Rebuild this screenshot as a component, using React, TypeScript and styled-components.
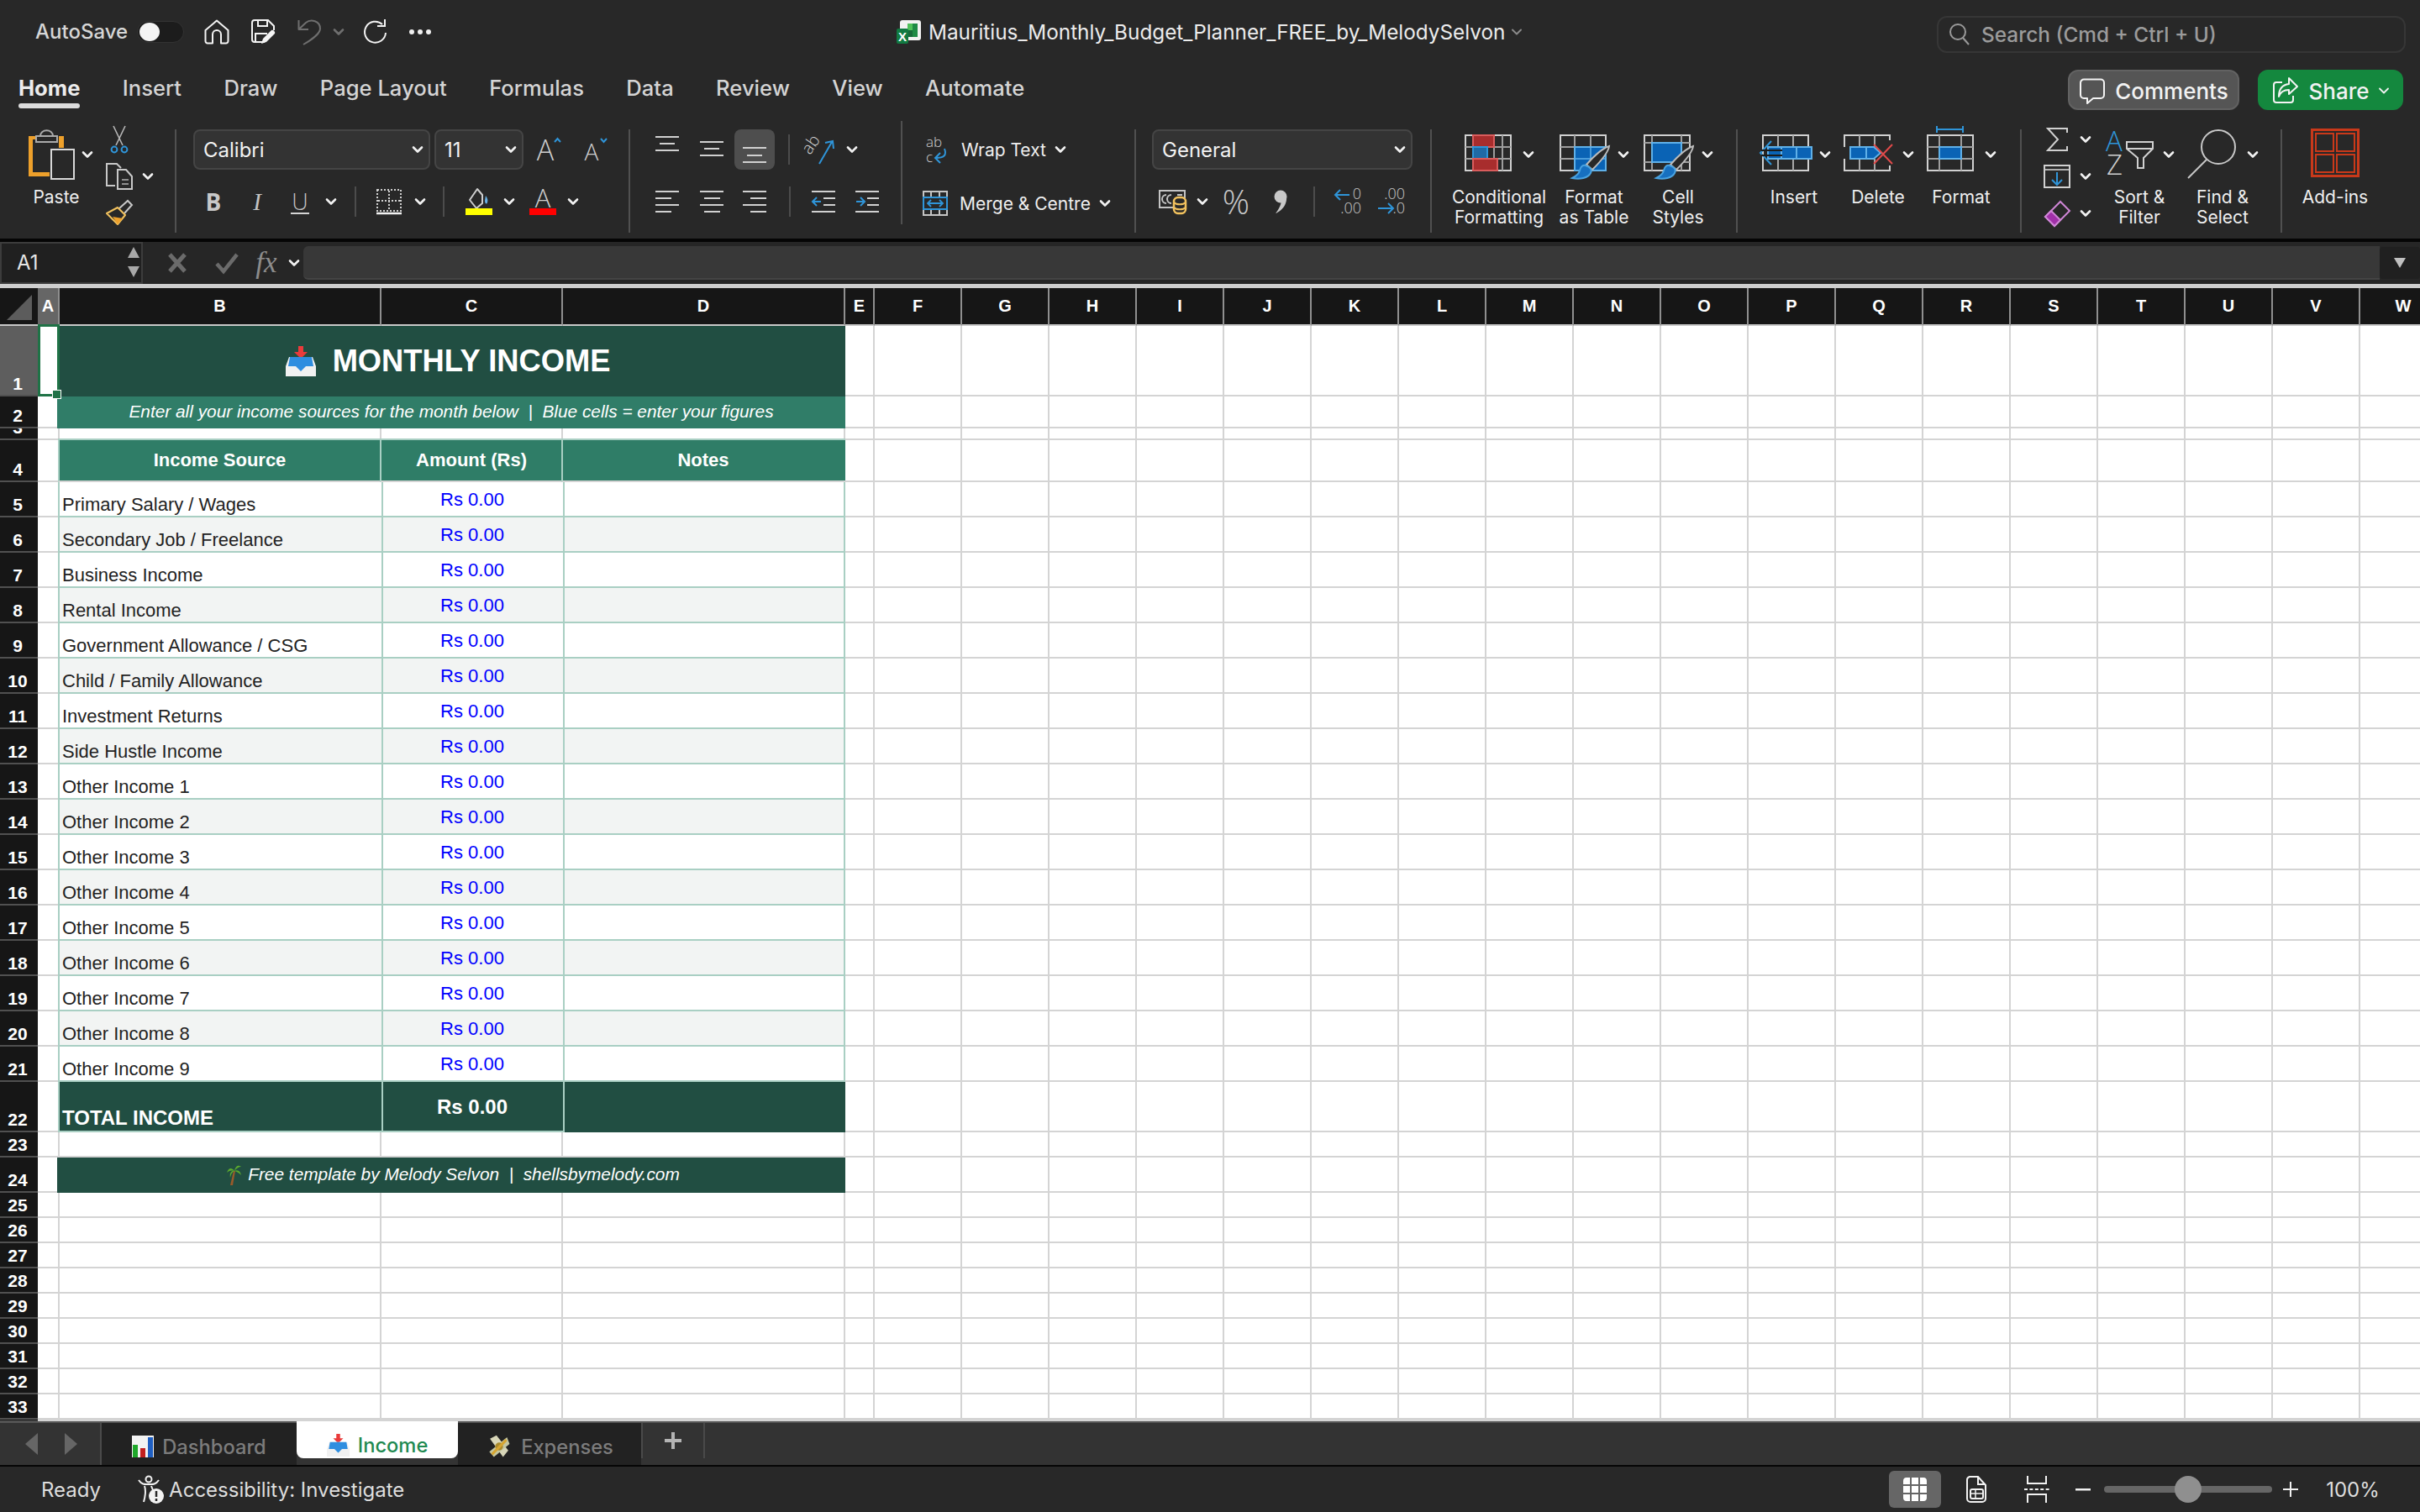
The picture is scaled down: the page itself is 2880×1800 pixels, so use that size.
import React from "react";
import styled, { createGlobalStyle } from "styled-components";

const GlobalStyle = createGlobalStyle`
  html, body {
    margin: 0;
    padding: 0;
    width: 2880px;
    height: 1800px;
    overflow: hidden;
    background: #282828;
    font-family: Inter, "Noto Sans", sans-serif;
  }
  * { box-sizing: border-box; }
`;

const Page = styled.div`
  width: 2880px;
  height: 1800px;
  display: flex;
  flex-direction: column;
  overflow: hidden;
`;

/* ---------- title bar ---------- */
const TitleBar = styled.div`
  height: 72px;
  flex: none;
  display: flex;
  align-items: center;
  padding: 3px 17px 0 42px;
  background: #282828;
`;
const QuickTools = styled.div`
  width: 1025px;
  display: grid;
  grid-template-columns: 121px 80px 55px 56px 43px 35px 55px 25px;
  align-items: center;
  justify-items: start;
`;
const AutoSaveLabel = styled.span`
  font-size: 24px;
  font-weight: 500;
  color: #d6d6d6;
`;
const Toggle = styled.div`
  width: 56px;
  height: 26px;
  border-radius: 13px;
  background: #1c1c1c;
  border: 1px solid #333;
  padding: 1px 2px;
`;
const ToggleKnob = styled.div`
  width: 24px;
  height: 22px;
  border-radius: 50%;
  background: #f4f4f4;
`;
const FileName = styled.div`
  display: flex;
  align-items: center;
  gap: 8px;
  font-size: 24.3px;
  color: #ececec;
  white-space: nowrap;
`;
const SearchBox = styled.div`
  margin-left: auto;
  width: 558px;
  height: 44px;
  margin-top: 6px;
  border: 2px solid #363636;
  border-radius: 12px;
  display: flex;
  align-items: center;
  gap: 13px;
  padding-left: 12px;
  font-size: 24.4px;
  font-weight: 500;
  color: #9b9b9b;
`;

/* ---------- ribbon tabs ---------- */
const TabsRow = styled.div`
  height: 64px;
  flex: none;
  display: flex;
  align-items: center;
  padding-left: 22px;
  padding-right: 20px;
  background: #282828;
`;
const MenuTab = styled.span<{ $active?: boolean }>`
  position: relative;
  margin-right: 50.4px;
  font-size: 25.6px;
  font-weight: ${(p) => (p.$active ? 700 : 500)};
  color: ${(p) => (p.$active ? "#ececec" : "#d4d4d4")};
  &::after {
    content: "";
    display: ${(p) => (p.$active ? "block" : "none")};
    position: absolute;
    left: 0;
    right: 0;
    bottom: -9px;
    height: 6px;
    border-radius: 3px;
    background: #dcdcdc;
  }
`;
const ActionButtons = styled.div`
  margin-left: auto;
  margin-top: 6px;
  display: flex;
  gap: 22px;
`;
const ActionButton = styled.button<{ $bg: string; $w: number; $line: string }>`
  width: ${(p) => p.$w}px;
  height: 48px;
  border-radius: 12px;
  border: 2px solid ${(p) => p.$line};
  background: ${(p) => p.$bg};
  color: #f2f2f2;
  font-family: inherit;
  font-size: 26px;
  font-weight: 500;
  display: flex;
  align-items: center;
  justify-content: center;
  gap: 11px;
  padding: 2px 0 0;
`;

/* ---------- ribbon ---------- */
const Ribbon = styled.div`
  height: 148px;
  flex: none;
  display: flex;
  align-items: flex-start;
  padding-top: 18px;
  background: #282828;
  color: #f0f0f0;
`;
const Group = styled.div<{ $w: number; $pl?: number }>`
  width: ${(p) => p.$w}px;
  height: 123px;
  flex: none;
  padding-left: ${(p) => p.$pl ?? 0}px;
  display: flex;
`;
const GroupStack = styled(Group)<{ $gap?: number }>`
  flex-direction: column;
  gap: ${(p) => p.$gap ?? 14}px;
`;
const GroupSep = styled.div<{ $up?: boolean }>`
  width: 2px;
  height: 123px;
  flex: none;
  background: #505050;
  margin-top: ${(p) => (p.$up ? -10 : 0)}px;
`;
const PasteCol = styled.div`
  width: 118px;
  padding-left: 34px;
  flex: none;
`;
const PasteTop = styled.div`
  display: flex;
  align-items: center;
  gap: 10px;
  height: 60px;
`;
const RibbonLabel = styled.div<{ $w?: number }>`
  width: ${(p) => (p.$w ? `${p.$w}px` : "auto")};
  font-size: 21px;
  line-height: 24px;
  text-align: center;
  color: #efefef;
  white-space: nowrap;
`;
const PasteLabel = styled(RibbonLabel)`
  margin-top: 9px;
`;
const ClipTools = styled.div`
  display: flex;
  flex-direction: column;
  margin-top: -4px;
  padding-left: 8px;
  gap: 12px;
`;
const ClipTool = styled.div`
  display: grid;
  grid-template-columns: 32px 12px;
  column-gap: 12px;
  justify-items: center;
  align-items: center;
`;
const Row48 = styled.div`
  height: 48px;
  display: flex;
  align-items: center;
`;
const Dropdown = styled.div<{ $w: number; $ml: number }>`
  width: ${(p) => p.$w}px;
  height: 48px;
  margin-left: ${(p) => p.$ml}px;
  flex: none;
  display: flex;
  align-items: center;
  justify-content: space-between;
  padding: 0 7px 0 10px;
  background: #333;
  border: 2px solid #454545;
  border-radius: 8px;
  font-size: 24px;
  color: #f2f2f2;
`;
const GlyphSlot = styled.div<{ $w: number; $ml: number }>`
  width: ${(p) => p.$w}px;
  margin-left: ${(p) => p.$ml}px;
  flex: none;
  display: flex;
  justify-content: center;
`;
const CellRow = styled.div<{ $cols: string; $pl: number }>`
  height: 48px;
  padding-left: ${(p) => p.$pl}px;
  display: grid;
  grid-template-columns: ${(p) => p.$cols};
  align-items: center;
  justify-items: center;
`;
const Highlight = styled.div`
  width: 48px;
  height: 48px;
  background: #4e4e4e;
  border-radius: 8px;
  display: flex;
  align-items: center;
  justify-content: center;
  justify-self: end;
`;
const InnerSep = styled.div<{ $h: number }>`
  width: 2px;
  height: ${(p) => p.$h}px;
  background: #4c4c4c;
`;
const BoldGlyph = styled.span`
  font-family: "Open Sans", sans-serif;
  font-size: 28px;
  font-weight: 700;
  line-height: 28px;
  color: #c8c8c8;
`;
const ItalicGlyph = styled.span`
  font-family: "Liberation Serif", serif;
  font-size: 29px;
  font-style: italic;
  line-height: 28px;
  color: #c4c4c4;
`;
const UnderGlyph = styled.span`
  font-family: "Open Sans", sans-serif;
  font-size: 27px;
  font-weight: 300;
  line-height: 27px;
  color: #c4c4c4;
  border-bottom: 2px solid #d4d4d4;
  padding: 0 1px;
`;
const PercentGlyph = styled.span`
  font-family: "Open Sans", sans-serif;
  font-size: 40px;
  font-weight: 300;
  line-height: 40px;
  color: #c8c8c8;
`;
const ColorBarTool = styled.div`
  display: flex;
  flex-direction: column;
  align-items: center;
`;
const ColorBar = styled.div<{ $c: string }>`
  width: 32px;
  height: 8px;
  background: ${(p) => p.$c};
`;
const MiniRow = styled.div<{ $pl: number }>`
  height: 48px;
  display: flex;
  align-items: center;
  padding-left: ${(p) => p.$pl}px;
`;
const MiniLabel = styled.span<{ $ml: number }>`
  margin: 0 11px 0 ${(p) => p.$ml}px;
  font-size: 21px;
  color: #efefef;
  white-space: nowrap;
`;
const LargeBtn = styled.div<{ $w: number }>`
  width: ${(p) => p.$w}px;
  flex: none;
  display: flex;
  flex-direction: column;
  align-items: center;
`;
const LargeIconRow = styled.div<{ $gap: number }>`
  height: 64px;
  margin-top: -2px;
  margin-bottom: 7px;
  display: flex;
  align-items: center;
  gap: ${(p) => p.$gap}px;
`;
const StackCol = styled.div`
  width: 92px;
  flex: none;
  margin-top: -10px;
  padding-left: 22px;
  display: flex;
  flex-direction: column;
`;
const StackRow = styled.div`
  height: 44px;
  display: grid;
  grid-template-columns: 40px 12px;
  column-gap: 8px;
  align-items: center;
  justify-items: center;
`;

/* ---------- formula bar ---------- */
const FormulaBar = styled.div`
  height: 54px;
  flex: none;
  display: flex;
  align-items: flex-start;
  border-top: 4px solid #050505;
  background: #262626;
`;
const NameBox = styled.div`
  width: 170px;
  height: 50px;
  flex: none;
  display: flex;
  align-items: center;
  justify-content: space-between;
  padding: 0 2px 2px 18px;
  background: #202020;
  border: 2px solid #3c3c3c;
  font-size: 24px;
  color: #e6e6e6;
`;
const FormulaTools = styled.div`
  width: 191px;
  flex: none;
  height: 50px;
  display: grid;
  grid-template-columns: 50px 68px 26px 39px;
  padding-left: 16px;
  align-items: center;
  justify-items: center;
`;
const FxGlyph = styled.span`
  font-family: "Liberation Serif", serif;
  font-style: italic;
  font-size: 35px;
  color: #8c8c8c;
`;
const FormulaInput = styled.div`
  flex: 1;
  height: 40px;
  margin-top: 5px;
  background: #383838;
  border-radius: 6px 0 0 6px;
  border-bottom: 2px solid #444;
`;
const FormulaExpand = styled.div`
  width: 48px;
  height: 38px;
  margin-top: 6px;
  flex: none;
  background: #202020;
  border-radius: 4px;
  display: flex;
  align-items: center;
  justify-content: center;
`;

/* ---------- sheet ---------- */
const Sheet = styled.div`
  height: 1354px;
  flex: none;
  overflow: hidden;
  border-top: 5px solid #cfcfcf;
  background: #fff;
  display: grid;
  grid-template-columns: 45px 26px 383px 216px 336px 35px repeat(18, 104px);
  grid-template-rows: 45px 84px 38px 14px 50px repeat(17, 42px) 60px 30px 42px repeat(9, 30px) 2px;
  font-family: "Liberation Sans", Arial, sans-serif;
`;
const Corner = styled.div`
  background: #161616;
  border-bottom: 2px solid #c8c8c8;
  padding: 8px 6px 4px 8px;
`;
const ColHead = styled.div<{ $on?: boolean }>`
  display: flex;
  align-items: center;
  justify-content: center;
  overflow: hidden;
  background: ${(p) => (p.$on ? "#666" : "#161616")};
  border-right: 2px solid #8f8f8f;
  border-bottom: 2px solid #c8c8c8;
  font-size: 20px;
  font-weight: 700;
  color: #fff;
`;
const RowHead = styled.div<{ $on?: boolean }>`
  display: flex;
  align-items: flex-end;
  justify-content: center;
  overflow: hidden;
  padding: 0 3px 1px 0;
  background: ${(p) => (p.$on ? "#5e5e5e" : "#161616")};
  border-bottom: 2px solid #505050;
  font-size: 21px;
  line-height: 24px;
  font-weight: 700;
  color: #fff;
`;
const Cell = styled.div`
  min-width: 0;
  border-right: 2px solid #d4d4d4;
  border-bottom: 2px solid #d4d4d4;
  background: #fff;
`;
const ActiveCell = styled.div`
  position: relative;
  margin-top: -2px;
  border: 3px solid #1f7246;
  background: #fff;
  &::after {
    content: "";
    position: absolute;
    right: -5px;
    bottom: -6px;
    width: 9px;
    height: 9px;
    background: #1f7246;
    border: 1px solid #fff;
    z-index: 2;
  }
`;
const Banner = styled.div<{ $bg: string }>`
  grid-column: span 3;
  display: flex;
  align-items: center;
  justify-content: center;
  gap: 20px;
  padding-right: 8px;
  background: ${(p) => p.$bg};
  color: #fff;
  margin-left: -3px;
`;
const BannerTitle = styled.span`
  font-size: 36.3px;
  font-weight: 700;
  line-height: 44px;
`;
const BannerNote = styled.span`
  font-size: 20.85px;
  font-style: italic;
  white-space: pre;
  padding: 0 0 2px 8px;
`;
const FooterNote = styled(BannerNote)`
  display: flex;
  align-items: center;
  gap: 8px;
  padding: 0 0 2px 12px;
`;
const HeadCell = styled.div`
  display: flex;
  align-items: center;
  justify-content: center;
  padding-right: 2px;
  background: #2f7d67;
  border-left: 2px solid #a9cfc3;
  border-top: 2px solid #a9cfc3;
  border-bottom: 2px solid #d4d4d4;
  margin-left: -2px;
  margin-top: -2px;
  font-size: 22px;
  font-weight: 700;
  color: #fff;
`;
const LabelCell = styled.div<{ $alt: boolean }>`
  display: flex;
  align-items: flex-end;
  padding: 0 0 1px 3px;
  background: ${(p) => (p.$alt ? "#f2f4f3" : "#fff")};
  border-left: 2px solid #a9cfc3;
  border-bottom: 2px solid #a9cfc3;
  margin-left: -2px;
  font-size: 22px;
  line-height: 24px;
  color: #222;
  white-space: nowrap;
`;
const AmountCell = styled.div<{ $alt: boolean }>`
  display: flex;
  align-items: center;
  justify-content: center;
  padding: 1px 2px 0 0;
  background: ${(p) => (p.$alt ? "#f2f4f3" : "#fff")};
  border-bottom: 2px solid #a9cfc3;
  border-left: 2px solid #a9cfc3;
  font-size: 22px;
  color: #0000ff;
`;
const NotesCell = styled.div<{ $alt: boolean }>`
  background: ${(p) => (p.$alt ? "#f2f4f3" : "#fff")};
  border-bottom: 2px solid #a9cfc3;
  border-left: 2px solid #a9cfc3;
  border-right: 2px solid #a9cfc3;
`;
const TotalCell = styled.div`
  display: flex;
  align-items: flex-end;
  padding: 0 0 1px 3px;
  margin-left: -2px;
  background: #214e42;
  border-left: 2px solid #a9cfc3;
  border-bottom: 2px solid #a9cfc3;
  font-size: 24px;
  line-height: 28px;
  font-weight: 700;
  color: #fff;
`;
const TotalAmount = styled.div`
  display: flex;
  align-items: center;
  justify-content: center;
  padding: 1px 2px 0 0;
  background: #214e42;
  border-left: 2px solid #a9cfc3;
  border-bottom: 2px solid #a9cfc3;
  font-size: 24px;
  font-weight: 700;
  color: #fff;
`;
const TotalBlank = styled.div`
  background: #214e42;
  border-left: 2px solid #a9cfc3;
`;

/* ---------- sheet tabs ---------- */
const TabBar = styled.div`
  height: 52px;
  flex: none;
  display: flex;
  background: #333;
  border-top: 2px solid #555;
`;
const TabArrows = styled.div`
  width: 121px;
  flex: none;
  display: flex;
  padding-left: 30px;
  gap: 32px;
  align-items: center;
  border-right: 2px solid #4a4a4a;
`;
const SheetTab = styled.div<{ $w: number }>`
  width: ${(p) => p.$w}px;
  flex: none;
  height: 50px;
  display: flex;
  align-items: center;
  justify-content: center;
  gap: 10px;
  padding-top: 6px;
  background: #222;
  font-size: 23.7px;
  font-weight: 500;
  color: #7c7c7c;
`;
const ActiveTab = styled(SheetTab)`
  height: 44px;
  margin-top: -2px;
  padding-top: 12px;
  background: #fff;
  color: #1f8a52;
  border-radius: 0 0 8px 8px;
`;
const AddTab = styled.div`
  width: 76px;
  flex: none;
  height: 42px;
  display: flex;
  align-items: center;
  justify-content: center;
  border-left: 2px solid #4a4a4a;
  border-right: 2px solid #4a4a4a;
`;

/* ---------- status bar ---------- */
const StatusBar = styled.div`
  height: 56px;
  flex: none;
  display: flex;
  align-items: center;
  padding-left: 49px;
  border-top: 2px solid #050505;
  background: #282828;
  font-size: 24px;
  color: #dedede;
`;
const StatusItem = styled.div<{ $ml: number }>`
  display: flex;
  align-items: center;
  gap: 5px;
  margin-left: ${(p) => p.$ml}px;
`;
const StatusRight = styled.div`
  margin-left: auto;
  display: grid;
  grid-template-columns: 62px 84px 60px 50px 200px 44px 104px;
  padding-right: 28px;
  align-items: center;
  justify-items: center;
`;
const ViewButton = styled.div`
  width: 62px;
  height: 44px;
  border-radius: 6px;
  background: #666;
  display: flex;
  align-items: center;
  justify-content: center;
`;
const ZoomTrack = styled.div`
  width: 200px;
  height: 8px;
  border-radius: 4px;
  background: #666;
  position: relative;
`;
const ZoomKnob = styled.div`
  position: absolute;
  left: 84px;
  top: -12px;
  width: 32px;
  height: 32px;
  border-radius: 50%;
  background: #8f8f8f;
`;

/* ---------- drawings ---------- */
const Svg = styled.svg`
  display: block;
  flex: none;
  overflow: visible;
`;
const Ico: React.FC<{ w: number; h: number; vw?: number; vh?: number; children: React.ReactNode }> = ({ w, h, vw, vh, children }) => (
  <Svg width={w} height={h} viewBox={`0 0 ${vw ?? w} ${vh ?? h}`} fill="none">
    {children}
  </Svg>
);

const Chevron: React.FC<{ c?: string; w?: number }> = ({ c = "#f2f2f2", w = 2.6 }) => (
  <Ico w={12} h={8}>
    <path d="M1 1.5 6 6.500 11 1.500" stroke={c} strokeWidth={w} strokeLinecap="round" strokeLinejoin="round" />
  </Ico>
);

const G = "#d0d0d0";
const BLUE = "#2f95d9";

const HomeIcon = () => (
  <Ico w={30} h={30}>
    <path d="M1.500 13 15 1.500 28.500 13V26a2.500 2.500 0 0 1-2.500 2.500H20V18a5 5 0 0 0-10 0v10.500H4A2.500 2.500 0 0 1 1.500 26Z" stroke="#f4f4f4" strokeWidth="2" strokeLinejoin="round" />
  </Ico>
);
const SaveIcon = () => (
  <Ico w={31} h={32}>
    <path d="M17 28H5a3 3 0 0 1-3-3V5a3 3 0 0 1 3-3h16l7 7v5" stroke="#f4f4f4" strokeWidth="2" />
    <path d="M9 2v7h11V2M6 27V18h14" stroke="#f4f4f4" strokeWidth="2" />
    <path d="M13 30l2-6 10-10c2-1 5 2 4 4L19 28Z" fill="#f4f4f4" />
  </Ico>
);
const UndoIcon = () => (
  <Ico w={28} h={32}>
    <path d="M1.500 2V13H13M1.500 13 10 5c6-5 17-2 17 7 0 6-11 14-20 19" stroke="#6f6f6f" strokeWidth="2" strokeLinejoin="round" />
  </Ico>
);
const RedoIcon = () => (
  <Ico w={28} h={30}>
    <path d="M23 6A12.500 12.500 0 1 0 27 16" stroke="#f4f4f4" strokeWidth="2" />
    <path d="M26 0V8H17" stroke="#f4f4f4" strokeWidth="2" />
  </Ico>
);
const Dots = () => (
  <Ico w={26} h={6}>
    <circle cx="3" cy="3" r="3" fill="#f0f0f0" />
    <circle cx="13" cy="3" r="3" fill="#f0f0f0" />
    <circle cx="23" cy="3" r="3" fill="#f0f0f0" />
  </Ico>
);
const ExcelFile = () => (
  <Ico w={30} h={28}>
    <rect x="4" y="0" width="25" height="24" rx="3" fill="#f2f2f2" />
    <rect x="13" y="4" width="6" height="8" fill="#4fc05a" />
    <rect x="19" y="4" width="6" height="16" fill="#1e8a45" />
    <rect x="13" y="12" width="6" height="8" fill="#17693a" />
    <rect x="0" y="10" width="14" height="18" rx="2" fill="#117a41" />
    <text x="7" y="24.500" textAnchor="middle" fontFamily="Liberation Sans" fontSize="15" fontWeight="700" fill="#fff">X</text>
  </Ico>
);
const SearchIcon = () => (
  <Ico w={26} h={26}>
    <circle cx="11" cy="10" r="9" stroke="#9a9a9a" strokeWidth="2" />
    <path d="M17 17l7 8" stroke="#9a9a9a" strokeWidth="2" />
  </Ico>
);
const CommentIcon = () => (
  <Ico w={32} h={30}>
    <path d="M6 1.500h20a4 4 0 0 1 4 4V20a4 4 0 0 1-4 4H17l-7 6v-6H6a4 4 0 0 1-4-4V5.500a4 4 0 0 1 4-4Z" stroke="#f4f4f4" strokeWidth="2" strokeLinejoin="round" />
  </Ico>
);
const ShareIcon = () => (
  <Ico w={32} h={32}>
    <path d="M12 6H5a3 3 0 0 0-3 3v18a3 3 0 0 0 3 3h17a3 3 0 0 0 3-3v-5" stroke="#f4f4f4" strokeWidth="2" />
    <path d="M20 1l10 10-10 9v-5c-6 0-10 2-12 8 0-9 4-14 12-15Z" stroke="#f4f4f4" strokeWidth="2" strokeLinejoin="round" />
  </Ico>
);

const PasteIcon = () => (
  <Ico w={54} h={60}>
    <path d="M0 8H10V12H5V51H25V56H0Z" fill="#eda02b" />
    <rect x="36" y="8" width="6" height="14" fill="#eda02b" />
    <path d="M14 8C14-1 29-1 29 8" stroke="#aaa" strokeWidth="2" />
    <rect x="9" y="8" width="25" height="7" fill="#282828" stroke="#aaa" strokeWidth="2" />
    <rect x="27" y="24" width="27" height="35" fill="#282828" stroke="#d8d8d8" strokeWidth="2" />
  </Ico>
);
const CutIcon = () => (
  <Ico w={22} h={32}>
    <path d="M4 0 15 23M18 0 7 23" stroke="#b8b8b8" strokeWidth="1.600" />
    <circle cx="5" cy="28" r="3.400" stroke={BLUE} strokeWidth="2" />
    <circle cx="17" cy="28" r="3.400" stroke={BLUE} strokeWidth="2" />
  </Ico>
);
const CopyIcon = () => (
  <Ico w={32} h={32}>
    <path d="M11 27H1V1H13L18 6" stroke="#c8c8c8" strokeWidth="2" />
    <path d="M14 8H24L31 16V31H14Z" fill="#282828" stroke="#c8c8c8" strokeWidth="2" />
    <path d="M19 20H27M19 25H27" stroke="#8f8f8f" strokeWidth="2" />
  </Ico>
);
const BrushIcon = () => (
  <Ico w={32} h={30}>
    <path d="M16 10 26 1 31 6 22 16" stroke="#c8c8c8" strokeWidth="2" />
    <path d="M14 9 23 18 14 29 1 16Z" stroke="#f2c25e" strokeWidth="2" strokeLinejoin="round" />
    <path d="M8 20 20 22 14 29Z" fill="#eda02b" />
  </Ico>
);
const GrowFont = ({ up }: { up: boolean }) => (
  <Ico w={30} h={30}>
    <text x="11" y="28" textAnchor="middle" fontFamily="Open Sans" fontWeight="300" fontSize={up ? 34 : 28} fill="#cfcfcf">A</text>
    <path d={up ? "M22 6l3.500-4 3.500 4" : "M22 2l3.500 4 3.500-4"} stroke={BLUE} strokeWidth="2" />
  </Ico>
);
const BorderIcon = () => (
  <Ico w={30} h={30}>
    <rect x="1" y="1" width="28" height="25" stroke="#d0d0d0" strokeWidth="2" strokeDasharray="2 2" />
    <path d="M15 2V26M2 14H28" stroke="#d0d0d0" strokeWidth="2" strokeDasharray="2 2" />
    <path d="M0 29H30" stroke="#f2f2f2" strokeWidth="2.500" />
  </Ico>
);
const FillIcon = () => (
  <Ico w={32} h={24}>
    <path d="M14 1 20 8V18L13 24 5 14Z" stroke="#cfcfcf" strokeWidth="2" strokeLinejoin="round" />
    <path d="M24 9c2 3 3 5 2 8s-3 1-3-2Z" fill="#67b0e6" />
  </Ico>
);
/* three lines, placed inside the 48px row by their offset from its top */
const AlignV = ({ y }: { y: number[] }) => (
  <Ico w={28} h={48}>
    <path d={`M0 ${y[0]}H28M5 ${y[1]}H23M0 ${y[2]}H28`} stroke={G} strokeWidth="2" />
  </Ico>
);
const AlignH = ({ mode }: { mode: "l" | "c" | "r" }) => {
  const s = mode === "l" ? 0 : mode === "c" ? 5 : 9;
  return (
    <Ico w={28} h={28}>
      <path d={`M0 2H28M${s} 10H${s + 19}M0 18H28M${s} 26H${s + 19}`} stroke={G} strokeWidth="2" />
    </Ico>
  );
};
const OrientIcon = () => (
  <Ico w={36} h={36}>
    <text x="3" y="25" fontFamily="Open Sans" fontWeight="300" fontSize="20" fill="#cfcfcf" transform="rotate(-55 3 25)">ab</text>
    <path d="M14 35 29 9M21 10l9-2 1 9" stroke={BLUE} strokeWidth="2" />
  </Ico>
);
const IndentIcon = ({ out }: { out: boolean }) => (
  <Ico w={28} h={28}>
    <path d="M0 2H28M14 10H28M14 18H28M0 26H28" stroke={G} strokeWidth="2" />
    <path d={out ? "M11 14H1M6 9 1 14 6 19" : "M1 14H11M6 9 11 14 6 19"} stroke={BLUE} strokeWidth="2" />
  </Ico>
);
const WrapIcon = () => (
  <Ico w={24} h={34}>
    <text x="0" y="14" fontFamily="Open Sans" fontWeight="300" fontSize="17" fill="#cfcfcf">ab</text>
    <text x="0" y="32" fontFamily="Open Sans" fontWeight="300" fontSize="17" fill="#cfcfcf">c</text>
    <path d="M22 16c3 8-1 11-10 11M17 21 11 27 17 33" stroke={BLUE} strokeWidth="2" />
  </Ico>
);
const MergeIcon = () => (
  <Ico w={30} h={30}>
    <rect x="1" y="1" width="28" height="28" stroke="#c4c4c4" strokeWidth="2" />
    <path d="M10 1V8M20 1V8M10 22V29M20 22V29" stroke="#c4c4c4" strokeWidth="2" />
    <rect x="1" y="8" width="28" height="14" fill="#282828" stroke={BLUE} strokeWidth="2" />
    <path d="M6 15H24M10 11 6 15 10 19M20 11 24 15 20 19" stroke={BLUE} strokeWidth="1.800" />
  </Ico>
);
const CurrencyIcon = () => (
  <Ico w={33} h={30}>
    <rect x="1" y="2" width="30" height="20" stroke="#c4c4c4" strokeWidth="2" />
    <path d="M9 7a4 4 0 0 0 0 10M15 7a4 4 0 0 0 0 10M22 7h6" stroke="#c4c4c4" strokeWidth="2" />
    <rect x="18" y="10" width="14" height="19" rx="5" fill="#282828" stroke="#f2c25e" strokeWidth="2.500" />
    <path d="M18 16c3 3 11 3 14 0M18 22c3 3 11 3 14 0" stroke="#f2c25e" strokeWidth="2" />
  </Ico>
);
const CommaIcon = () => (
  <Ico w={16} h={28}>
    <circle cx="8" cy="8" r="7.500" fill="#c8c8c8" />
    <path d="M15 8C16 18 9 25 2 28 7 22 9 16 9 12Z" fill="#c8c8c8" />
  </Ico>
);
const DecimalIcon = ({ more }: { more: boolean }) => (
  <Ico w={32} h={32}>
    <text x="32" y="13" textAnchor="end" fontFamily="Open Sans" fontWeight="300" fontSize="18" fill="#c8c8c8">{more ? "0" : ".00"}</text>
    <text x="32" y="30" textAnchor="end" fontFamily="Open Sans" fontWeight="300" fontSize="18" fill="#c8c8c8">{more ? ".00" : ".0"}</text>
    {more ? (
      <path d="M18 8H1M7 2 1 8 7 14" stroke={BLUE} strokeWidth="2" />
    ) : (
      <path d="M0 24H18M12 18 18 24 12 30" stroke={BLUE} strokeWidth="2" />
    )}
  </Ico>
);

const GridLines: React.FC<{ w: number; xs: number[]; ys?: number[] }> = ({ w, xs, ys = [23, 37] }) => (
  <>
    <rect x="1" y="9" width={w - 2} height="42" stroke={G} strokeWidth="2" />
    <path d={xs.map((x) => `M${x} 9V51`).join("") + ys.map((y) => `M1 ${y}H${w - 1}`).join("")} stroke="#9d9d9d" strokeWidth="2" />
  </>
);
const CondIcon = () => (
  <Ico w={56} h={64}>
    <GridLines w={56} xs={[10, 35, 45]} />
    <rect x="10" y="9" width="25" height="14" fill="#a82d2d" stroke="#d95c5c" strokeWidth="2" />
    <rect x="10" y="23" width="17" height="14" fill="#1f6aa5" stroke="#2f95d9" strokeWidth="2" />
    <rect x="10" y="37" width="29" height="14" fill="#a82d2d" stroke="#d95c5c" strokeWidth="2" />
  </Ico>
);
const Paintbrush = () => (
  <>
    <path d="M59 22C58 30 46 43 39 50L32 44C39 36 50 25 59 22Z" fill="#282828" stroke="#bdbdbd" strokeWidth="2" />
    <path d="M31 45C37 47 39 50 37 54 34 60 24 62 15 60 21 57 23 55 24 51 25 46 28 44 31 45Z" fill="#1770c0" stroke="#4aa3e0" strokeWidth="2" />
  </>
);
const FormatTableIcon = () => (
  <Ico w={62} h={64}>
    <GridLines w={56} xs={[18, 37]} />
    <rect x="18" y="23" width="37" height="28" fill="#0a63b5" stroke="#5fb0e8" strokeWidth="2" />
    <path d="M37 23V51M18 37H55" stroke="#5fb0e8" strokeWidth="1.500" />
    <Paintbrush />
  </Ico>
);
const CellStylesIcon = () => (
  <Ico w={62} h={64}>
    <GridLines w={56} xs={[10, 45]} ys={[18, 41]} />
    <rect x="10" y="18" width="35" height="23" fill="#0a63b5" stroke="#5fb0e8" strokeWidth="2" />
    <Paintbrush />
  </Ico>
);
const InsertIcon = () => (
  <Ico w={64} h={64}>
    <rect x="5" y="9" width="54" height="42" stroke={G} strokeWidth="2" />
    <path d="M23 9V51M41 9V51" stroke="#a8a8a8" strokeWidth="2" />
    <rect x="11" y="23" width="52" height="14" fill="#0a63b5" stroke="#5fb0e8" strokeWidth="2" />
    <path d="M27 23V37M45 23V37" stroke="#5fb0e8" strokeWidth="2" />
    <path d="M15 16 2 30 15 44" stroke={BLUE} strokeWidth="2" />
    <path d="M3 27H28M3 33H28" stroke="#1b1b1b" strokeWidth="2" />
  </Ico>
);
const DeleteIcon = () => (
  <Ico w={60} h={64}>
    <path d="M1 23V9H55V15M1 37V51H55V45" stroke={G} strokeWidth="2" />
    <path d="M19 9V23M37 9V23M19 37V51M37 37V51" stroke="#a8a8a8" strokeWidth="2" />
    <path d="M8 23H36L44 30 36 37H8Z" fill="#0a63b5" stroke="#5fb0e8" strokeWidth="2" />
    <path d="M27 23V37" stroke="#5fb0e8" strokeWidth="2" />
    <path d="M36 20 58 43M58 20 36 43" stroke="#e04a4a" strokeWidth="2" />
  </Ico>
);
const FormatIcon = () => (
  <Ico w={56} h={64}>
    <GridLines w={56} xs={[15, 41]} />
    <rect x="15" y="23" width="26" height="14" fill="#0a63b5" stroke="#5fb0e8" strokeWidth="2" />
    <path d="M12 2H43M12-2V6M43-2V6" stroke={BLUE} strokeWidth="2" />
  </Ico>
);
const SigmaIcon = () => (
  <Ico w={24} h={28}>
    <path d="M24 6V1H1L13 14 1 27H24V22" stroke={G} strokeWidth="2" />
  </Ico>
);
const FillDownIcon = () => (
  <Ico w={32} h={28}>
    <rect x="1" y="1" width="30" height="26" stroke={G} strokeWidth="2" />
    <path d="M1 6H31" stroke={G} strokeWidth="1.600" />
    <path d="M16 9V24M10 18 16 24 22 18" stroke={BLUE} strokeWidth="2" />
  </Ico>
);
const EraserIcon = () => (
  <Ico w={32} h={32}>
    <path d="M20 2 31 13 13 31 2 20Z" stroke="#cf86d6" strokeWidth="2" />
    <path d="M9 13 20 24 13 31 2 20Z" fill="#a030a8" stroke="#cf86d6" strokeWidth="2" />
  </Ico>
);
const SortIcon = () => (
  <Ico w={56} h={64}>
    <text x="0" y="28" fontFamily="Open Sans" fontWeight="300" fontSize="33" fill={BLUE}>A</text>
    <text x="1" y="56" fontFamily="Open Sans" fontWeight="300" fontSize="33" fill="#cfcfcf">Z</text>
    <path d="M25 17H56V25L45 36V48H38V36L25 25ZM25 25H56" stroke={G} strokeWidth="2" />
  </Ico>
);
const FindIcon = () => (
  <Ico w={58} h={64}>
    <circle cx="37" cy="23" r="20" stroke="#c8c8c8" strokeWidth="2" />
    <path d="M23 38 1 60" stroke="#c8c8c8" strokeWidth="2" />
  </Ico>
);
const AddinsIcon = () => (
  <Ico w={58} h={64}>
    <rect x="1.500" y="2.500" width="55" height="55" stroke="#c9391a" strokeWidth="3" />
    <rect x="6" y="7" width="21" height="21" stroke="#c9391a" strokeWidth="2" />
    <rect x="31" y="7" width="21" height="21" stroke="#c9391a" strokeWidth="2" />
    <rect x="6" y="32" width="21" height="21" stroke="#c9391a" strokeWidth="2" />
    <rect x="31" y="32" width="21" height="21" stroke="#c9391a" strokeWidth="2" />
  </Ico>
);
const Spinner = () => (
  <Ico w={14} h={36}>
    <path d="M7 0 14 13H0ZM7 36 0 23H14Z" fill="#a8a8a8" />
  </Ico>
);
const CrossIcon = () => (
  <Ico w={22} h={24}>
    <path d="M2 2 20 22M20 2 2 22" stroke="#6b6b6b" strokeWidth="5" />
  </Ico>
);
const CheckIcon = () => (
  <Ico w={28} h={24}>
    <path d="M2 13 10 22 26 2" stroke="#6b6b6b" strokeWidth="4.500" />
  </Ico>
);
const InboxEmoji: React.FC<{ s: number }> = ({ s }) => (
  <Svg width={s} height={s} viewBox="0 0 36 36">
    <path d="M15 0H21V7H26L18 15 10 7H15Z" fill="#ea3b3b" />
    <path d="M4 13H32L36 24V36H0V24Z" fill="#f1f1f1" />
    <path d="M5 13H31L33 24H24L18 30 12 24H3Z" fill="#2f8ee0" />
  </Svg>
);
const ChartEmoji = () => (
  <Ico w={26} h={26}>
    <rect width="26" height="26" fill="#f3f3f3" />
    <rect x="1" y="11" width="6" height="15" fill="#1fa82a" />
    <rect x="10" y="15" width="6" height="11" fill="#c22020" />
    <rect x="19" y="2" width="6" height="24" fill="#1f5fc2" />
  </Ico>
);
const MoneyEmoji = () => (
  <Ico w={32} h={28} vw={32} vh={36}>
    <path d="M2 6 12 1 30 24 22 34Z" fill="#d8d6b8" />
    <path d="M28 4 32 14 8 34 1 26Z" fill="#c4c7a2" />
    <circle cx="16" cy="18" r="6" fill="#a98a2c" />
    <path d="M5 30 27 8" stroke="#d6a531" strokeWidth="4" />
  </Ico>
);
const PalmEmoji = () => (
  <Ico w={18} h={26}>
    <path d="M9 9 5 26H8L11 9Z" fill="#9a5a2a" />
    <path d="M10 9C6 4 3 6 1 11 3 9 6 8 10 9ZM10 9C11 4 14 1 18 4 15 4 12 6 10 9ZM10 9C14 7 17 9 18 14 15 11 13 10 10 9ZM10 9C8 10 6 12 5 17 4 12 6 8 10 9Z" fill="#5cab2e" />
  </Ico>
);
const AccessIcon = () => (
  <Ico w={32} h={34}>
    <circle cx="13" cy="5" r="3.500" stroke="#f2f2f2" strokeWidth="2" />
    <path d="M1 6C5 12 9 11 13 11S21 12 25 6M8 13C10 19 9 25 7 32M16 13L18 18" stroke="#f2f2f2" strokeWidth="2" />
    <circle cx="22" cy="25" r="9" fill="#f2f2f2" />
    <path d="M22 19V26M22 28V31" stroke="#282828" strokeWidth="2.500" />
  </Ico>
);
const PageViewIcon = () => (
  <Ico w={24} h={32}>
    <path d="M4 1H14L23 11V27a4 4 0 0 1-4 4H5a4 4 0 0 1-4-4V5a4 4 0 0 1 3-4ZM14 1V10H23" stroke="#f2f2f2" strokeWidth="2" />
    <rect x="5" y="16" width="15" height="11" rx="2" stroke="#f2f2f2" strokeWidth="2" />
    <path d="M5 21H20M11 16V27" stroke="#f2f2f2" strokeWidth="1.500" />
  </Ico>
);
const BreakViewIcon = () => (
  <Ico w={30} h={32}>
    <path d="M4 0V9H26V0M4 32V22H26V32" stroke="#f2f2f2" strokeWidth="2" />
    <path d="M0 16H30" stroke="#f2f2f2" strokeWidth="2" strokeDasharray="4 2.400" />
  </Ico>
);
const GridViewIcon = () => (
  <Ico w={28} h={28}>
    <path d="M4 0H8V8H0V4A4 4 0 0 1 4 0ZM10 0H18V8H10ZM20 0H24A4 4 0 0 1 28 4V8H20ZM0 10H8V18H0ZM10 10H18V18H10ZM20 10H28V18H20ZM0 20H8V28H4A4 4 0 0 1 0 24ZM10 20H18V28H10ZM20 20H28V24A4 4 0 0 1 24 28H20Z" fill="#fff" />
  </Ico>
);

/* ---------- data ---------- */
const columns = ["A", "B", "C", "D", "E", "F", "G", "H", "I", "J", "K", "L", "M", "N", "O", "P", "Q", "R", "S", "T", "U", "V", "W"];
const menu = ["Insert", "Draw", "Page Layout", "Formulas", "Data", "Review", "View", "Automate"];
const incomeRows = [
  "Primary Salary / Wages",
  "Secondary Job / Freelance",
  "Business Income",
  "Rental Income",
  "Government Allowance / CSG",
  "Child / Family Allowance",
  "Investment Returns",
  "Side Hustle Income",
  "Other Income 1",
  "Other Income 2",
  "Other Income 3",
  "Other Income 4",
  "Other Income 5",
  "Other Income 6",
  "Other Income 7",
  "Other Income 8",
  "Other Income 9",
];

const BlankRight = ({ row }: { row: number }) => (
  <>
    {Array.from({ length: 19 }, (_, i) => (
      <Cell key={`${row}-${i}`} />
    ))}
  </>
);

const SheetGrid = () => {
  const tableRow = (n: number, body: React.ReactNode, first?: React.ReactNode) => (
    <React.Fragment key={n}>
      <RowHead $on={n === 1}>{n <= 33 ? n : ""}</RowHead>
      {first ?? <Cell />}
      {body}
      <BlankRight row={n} />
    </React.Fragment>
  );
  return (
    <Sheet>
      <Corner>
        <Ico w={30} h={30}>
          <path d="M30 0V30H0Z" fill="#5c5c5c" />
        </Ico>
      </Corner>
      {columns.map((c) => (
        <ColHead key={c} $on={c === "A"}>
          {c}
        </ColHead>
      ))}
      {tableRow(
        1,
        <Banner $bg="#214e42">
          <InboxEmoji s={36} />
          <BannerTitle>MONTHLY INCOME</BannerTitle>
        </Banner>,
        <ActiveCell />
      )}
      {tableRow(
        2,
        <Banner $bg="#307d68">
          <BannerNote>{"Enter all your income sources for the month below  |  Blue cells = enter your figures"}</BannerNote>
        </Banner>
      )}
      {tableRow(
        3,
        <>
          <Cell />
          <Cell />
          <Cell />
        </>
      )}
      {tableRow(
        4,
        <>
          <HeadCell>Income Source</HeadCell>
          <HeadCell>Amount (Rs)</HeadCell>
          <HeadCell>Notes</HeadCell>
        </>
      )}
      {incomeRows.map((label, i) =>
        tableRow(
          i + 5,
          <>
            <LabelCell $alt={i % 2 === 1}>{label}</LabelCell>
            <AmountCell $alt={i % 2 === 1}>Rs 0.00</AmountCell>
            <NotesCell $alt={i % 2 === 1} />
          </>
        )
      )}
      {tableRow(
        22,
        <>
          <TotalCell>TOTAL INCOME</TotalCell>
          <TotalAmount>Rs 0.00</TotalAmount>
          <TotalBlank />
        </>
      )}
      {tableRow(
        23,
        <>
          <Cell />
          <Cell />
          <Cell />
        </>
      )}
      {tableRow(
        24,
        <Banner $bg="#214e42">
          <FooterNote>
            <PalmEmoji />
            {"Free template by Melody Selvon  |  shellsbymelody.com"}
          </FooterNote>
        </Banner>
      )}
      {Array.from({ length: 10 }, (_, i) =>
        tableRow(
          i + 25,
          <>
            <Cell />
            <Cell />
            <Cell />
          </>
        )
      )}
    </Sheet>
  );
};

const App = () => (
  <Page>
    <GlobalStyle />
    <TitleBar>
      <QuickTools>
        <AutoSaveLabel>AutoSave</AutoSaveLabel>
        <Toggle>
          <ToggleKnob />
        </Toggle>
        <HomeIcon />
        <SaveIcon />
        <UndoIcon />
        <Chevron c="#6f6f6f" />
        <RedoIcon />
        <Dots />
      </QuickTools>
      <FileName>
        <ExcelFile />
        Mauritius_Monthly_Budget_Planner_FREE_by_MelodySelvon
        <Chevron c="#8a8a8a" w={2} />
      </FileName>
      <SearchBox>
        <SearchIcon />
        Search (Cmd + Ctrl + U)
      </SearchBox>
    </TitleBar>

    <TabsRow>
      <MenuTab $active>Home</MenuTab>
      {menu.map((m) => (
        <MenuTab key={m}>{m}</MenuTab>
      ))}
      <ActionButtons>
        <ActionButton $bg="#555" $w={204} $line="#626262">
          <CommentIcon />
          Comments
        </ActionButton>
        <ActionButton $bg="#14883e" $w={173} $line="#14883e">
          <ShareIcon />
          Share
          <Chevron w={1.8} />
        </ActionButton>
      </ActionButtons>
    </TabsRow>

    <Ribbon>
      <Group $w={208}>
        <PasteCol>
          <PasteTop>
            <PasteIcon />
            <Chevron />
          </PasteTop>
          <PasteLabel $w={66}>Paste</PasteLabel>
        </PasteCol>
        <ClipTools>
          <ClipTool>
            <CutIcon />
            <span />
          </ClipTool>
          <ClipTool>
            <CopyIcon />
            <Chevron />
          </ClipTool>
          <ClipTool>
            <BrushIcon />
            <span />
          </ClipTool>
        </ClipTools>
      </Group>
      <GroupSep />

      <GroupStack $w={538}>
        <Row48>
          <Dropdown $w={282} $ml={20}>
            Calibri
            <Chevron />
          </Dropdown>
          <Dropdown $w={106} $ml={5}>
            11
            <Chevron />
          </Dropdown>
          <GlyphSlot $w={30} $ml={15}>
            <GrowFont up />
          </GlyphSlot>
          <GlyphSlot $w={30} $ml={25}>
            <GrowFont up={false} />
          </GlyphSlot>
        </Row48>
        <CellRow $cols="48px 56px 46px 28px 30px 50px 24px 32px 52px 20px 60px 12px" $pl={20}>
          <BoldGlyph>B</BoldGlyph>
          <ItalicGlyph>I</ItalicGlyph>
          <UnderGlyph>U</UnderGlyph>
          <Chevron />
          <InnerSep $h={36} />
          <BorderIcon />
          <Chevron />
          <InnerSep $h={36} />
          <ColorBarTool>
            <FillIcon />
            <ColorBar $c="#ffff00" />
          </ColorBarTool>
          <Chevron />
          <ColorBarTool>
            <Ico w={32} h={24}>
              <text x="16" y="23" textAnchor="middle" fontFamily="Open Sans" fontWeight="300" fontSize="31" fill="#cfcfcf">A</text>
            </Ico>
            <ColorBar $c="#ff0000" />
          </ColorBarTool>
          <Chevron />
        </CellRow>
      </GroupStack>
      <GroupSep />

      <GroupStack $w={322}>
        <CellRow $cols="56px 50px 50px 34px 46px 24px" $pl={16}>
          <AlignV y={[9, 17, 25]} />
          <AlignV y={[15, 23, 31]} />
          <Highlight>
            <AlignV y={[22, 31, 39]} />
          </Highlight>
          <InnerSep $h={36} />
          <OrientIcon />
          <Chevron />
        </CellRow>
        <CellRow $cols="56px 50px 52px 32px 48px 56px" $pl={16}>
          <AlignH mode="l" />
          <AlignH mode="c" />
          <AlignH mode="r" />
          <InnerSep $h={36} />
          <IndentIcon out />
          <IndentIcon out={false} />
        </CellRow>
      </GroupStack>
      <GroupSep $up />

      <GroupStack $w={276} $gap={16}>
        <MiniRow $pl={28}>
          <WrapIcon />
          <MiniLabel $ml={18}>Wrap Text</MiniLabel>
          <Chevron />
        </MiniRow>
        <MiniRow $pl={24}>
          <MergeIcon />
          <MiniLabel $ml={14}>Merge &amp; Centre</MiniLabel>
          <Chevron />
        </MiniRow>
      </GroupStack>
      <GroupSep />

      <GroupStack $w={350}>
        <Row48>
          <Dropdown $w={310} $ml={19}>
            General
            <Chevron />
          </Dropdown>
        </Row48>
        <CellRow $cols="32px 40px 40px 66px 14px 66px 38px" $pl={27}>
          <CurrencyIcon />
          <Chevron />
          <PercentGlyph>%</PercentGlyph>
          <CommaIcon />
          <InnerSep $h={36} />
          <DecimalIcon more />
          <DecimalIcon more={false} />
        </CellRow>
      </GroupStack>
      <GroupSep />

      <Group $w={362} $pl={20}>
        <LargeBtn $w={120}>
          <LargeIconRow $gap={14}>
            <CondIcon />
            <Chevron />
          </LargeIconRow>
          <RibbonLabel>
            Conditional
            <br />
            Formatting
          </RibbonLabel>
        </LargeBtn>
        <LargeBtn $w={106}>
          <LargeIconRow $gap={8}>
            <FormatTableIcon />
            <Chevron />
          </LargeIconRow>
          <RibbonLabel>
            Format
            <br />
            as Table
          </RibbonLabel>
        </LargeBtn>
        <LargeBtn $w={94}>
          <LargeIconRow $gap={8}>
            <CellStylesIcon />
            <Chevron />
          </LargeIconRow>
          <RibbonLabel>
            Cell
            <br />
            Styles
          </RibbonLabel>
        </LargeBtn>
      </Group>
      <GroupSep />

      <Group $w={336} $pl={16}>
        <LargeBtn $w={102}>
          <LargeIconRow $gap={9}>
            <InsertIcon />
            <Chevron />
          </LargeIconRow>
          <RibbonLabel>Insert</RibbonLabel>
        </LargeBtn>
        <LargeBtn $w={98}>
          <LargeIconRow $gap={11}>
            <DeleteIcon />
            <Chevron />
          </LargeIconRow>
          <RibbonLabel>Delete</RibbonLabel>
        </LargeBtn>
        <LargeBtn $w={100}>
          <LargeIconRow $gap={14}>
            <FormatIcon />
            <Chevron />
          </LargeIconRow>
          <RibbonLabel>Format</RibbonLabel>
        </LargeBtn>
      </Group>
      <GroupSep />

      <Group $w={308}>
        <StackCol>
          <StackRow>
            <SigmaIcon />
            <Chevron />
          </StackRow>
          <StackRow>
            <FillDownIcon />
            <Chevron />
          </StackRow>
          <StackRow>
            <EraserIcon />
            <Chevron />
          </StackRow>
        </StackCol>
        <LargeBtn $w={96}>
          <LargeIconRow $gap={13}>
            <SortIcon />
            <Chevron />
          </LargeIconRow>
          <RibbonLabel>
            Sort &amp;
            <br />
            Filter
          </RibbonLabel>
        </LargeBtn>
        <LargeBtn $w={102}>
          <LargeIconRow $gap={14}>
            <FindIcon />
            <Chevron />
          </LargeIconRow>
          <RibbonLabel>
            Find &amp;
            <br />
            Select
          </RibbonLabel>
        </LargeBtn>
      </Group>
      <GroupSep />

      <Group $w={126}>
        <LargeBtn $w={126}>
          <LargeIconRow $gap={0}>
            <AddinsIcon />
          </LargeIconRow>
          <RibbonLabel>Add-ins</RibbonLabel>
        </LargeBtn>
      </Group>
    </Ribbon>

    <FormulaBar>
      <NameBox>
        A1
        <Spinner />
      </NameBox>
      <FormulaTools>
        <CrossIcon />
        <CheckIcon />
        <FxGlyph>fx</FxGlyph>
        <Chevron />
      </FormulaTools>
      <FormulaInput />
      <FormulaExpand>
        <Ico w={14} h={14}>
          <path d="M0 1H14L7 13Z" fill="#c0c0c0" />
        </Ico>
      </FormulaExpand>
    </FormulaBar>

    <SheetGrid />

    <TabBar>
      <TabArrows>
        <Ico w={15} h={26}>
          <path d="M15 0V26L0 13Z" fill="#666" />
        </Ico>
        <Ico w={15} h={26}>
          <path d="M0 0V26L15 13Z" fill="#666" />
        </Ico>
      </TabArrows>
      <SheetTab $w={232}>
        <ChartEmoji />
        Dashboard
      </SheetTab>
      <ActiveTab $w={192}>
        <InboxEmoji s={27} />
        Income
      </ActiveTab>
      <SheetTab $w={218}>
        <MoneyEmoji />
        Expenses
      </SheetTab>
      <AddTab>
        <Ico w={20} h={20}>
          <path d="M10 0V20M0 10H20" stroke="#b4b4b4" strokeWidth="4" />
        </Ico>
      </AddTab>
    </TabBar>

    <StatusBar>
      Ready
      <StatusItem $ml={44}>
        <AccessIcon />
        Accessibility: Investigate
      </StatusItem>
      <StatusRight>
        <ViewButton>
          <GridViewIcon />
        </ViewButton>
        <PageViewIcon />
        <BreakViewIcon />
        <Ico w={18} h={4}>
          <rect width="18" height="2.500" y="1" fill="#f0f0f0" />
        </Ico>
        <ZoomTrack>
          <ZoomKnob />
        </ZoomTrack>
        <Ico w={18} h={18}>
          <path d="M9 0V18M0 9H18" stroke="#f0f0f0" strokeWidth="2" />
        </Ico>
        <span>100%</span>
      </StatusRight>
    </StatusBar>
  </Page>
);

export default App;
